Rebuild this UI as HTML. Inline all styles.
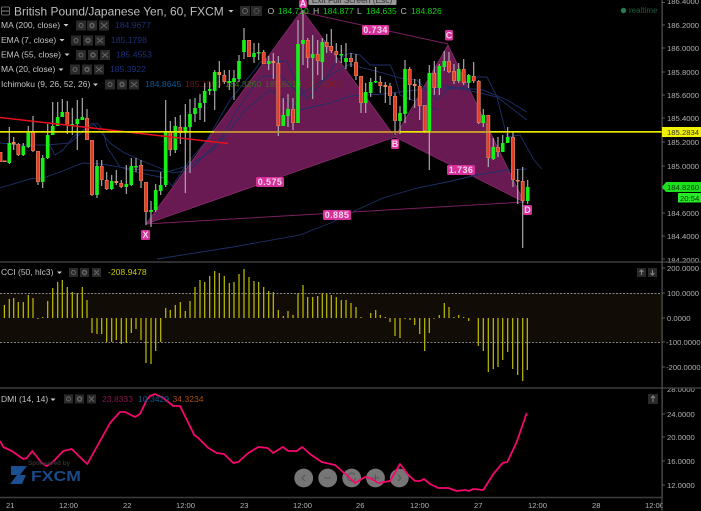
<!DOCTYPE html>
<html><head><meta charset="utf-8"><style>
html,body{margin:0;padding:0;background:#000;width:701px;height:511px;overflow:hidden}
svg{display:block;filter:blur(.3px);font-family:"Liberation Sans",sans-serif}
.b{fill:#2a2a2a}.g{stroke:#666;fill:none;stroke-width:1}
.l{fill:#c4c4c4;font-size:8.5px}.a{fill:#b0b0b0;font-size:7.7px}.t{fill:#b5b5b5;font-size:7.6px}
.p{fill:#d6309b}.w{fill:#f4d6ea;font-size:9px;font-weight:bold;text-anchor:middle}
</style></head><body>
<svg width="701" height="511" viewBox="0 0 701 511" xmlns="http://www.w3.org/2000/svg">
<rect width="701" height="511" fill="#000"/>
<!-- pattern -->
<path d="M146 224L302 10L395 137Z" fill="#6a1a52" stroke="#8a2b6e" stroke-width=".8"/>
<path d="M395 137L448 45L524 202Z" fill="#6a1a52" stroke="#8a2b6e" stroke-width=".8"/>
<path d="M146 224L524 202M302 12L448 44" stroke="#7a1f5f" stroke-width="1" fill="none"/>
<!-- indicator text under chart -->
<text x="145" y="87" font-size="8.7" fill="#0a5a9a">184.8645</text>
<text x="185" y="87" font-size="8.7" fill="#6a1515">185.1550</text>
<text x="225" y="87" font-size="8.7" fill="#3f6f1a">184.8260</text>
<text x="265" y="87" font-size="8.7" fill="#3f6a1a">185.6613</text>
<text x="305" y="87" font-size="8.7" fill="#8a1a1a">185.4265</text>
<!-- blue MA lines -->
<g fill="none" stroke="#1f3068" stroke-width=".9">
<path d="M157 259L233 247L300 235L333 222L350 213L383 198L417 188L447 182L477 175L507 170L527 169"/>
<path d="M0 188L30 179L43 178L60 172L83 163L100 164L133 169L167 172L190 165L213 150L230 130L245 110L270 90L300 110L330 103L350 96L383 94L417 90L443 88L463 88L483 90L507 100L527 112"/>
<path d="M0 143L20 145L47 145L70 143L87 128L97 123L103 130L107 147L120 167L135 172L165 178L172 186L190 160L207 140L230 100L257 67L260 62L287 61L295 80L307 99L327 77L337 60L350 53L360 55L370 65L390 65L394 73L400 95L437 110"/>
<path d="M48 142L55 155L63 150L73 137L93 123L110 143L123 152L140 160L157 167L173 173L190 170L220 140L237 110L260 77L280 75L300 95L330 75L350 64L363 68L383 73L400 78L417 80L437 100L447 90L463 87L477 77L487 77L497 97L507 137L520 135L534 160L542 169"/>
<path d="M433 83L467 90L497 97L527 120"/>
</g>
<!-- wicks -->
<path stroke="#b0b0b0" stroke-width="1.150" fill="none" d="M9.3 127V164M13.7 137V150M18.3 143V156M23.3 143V156M28.3 126V148M33 116V152M38 151V185M42.700 155V188M47.700 124V159M52.700 102V135M57.700 102V126M62.300 99V117M67.300 101V134M72.300 108V135M77.300 100V150M82.300 98V120M87 109V140M92 140V196M97 160V198M101.700 160V186M106.700 172V190M111.700 175V190M116.300 170V185M121.300 180V188M126.300 165V194M131.300 158V186M136 158V172M141 160V188M146 182V225M151 201V227M155.700 184V212M160.700 172V195M165.700 100V187M170.300 121V156M175.300 117V153M180.300 115V144M185.300 104V193M190 99V173M195 98V122M200 94V120M204.700 83V122M209.700 82V95M214.700 70V110M219.300 61V88M224.300 70V84M229.300 70V90M234 70V100M239 55V82M244 28V59M249 40V57M254 43V63M258.700 43V60M263.700 50V64M268.700 56V70M273.300 53V79M278.300 56V136M283.300 98V126M288 94V127M293 98V130M298 20V123M303 10V65M307.700 38V68M312.700 35V99M317.700 40V75M322.300 38V80M326.700 34V53M331.300 29V53M336.300 43V63M341.300 45V63M346 43V69M351 53V67M356 54V80M361 76V113M365.700 83V113M370.700 78V97M375.700 67V83M380.300 76V93M385.300 82V103M390 83V105M395 93V135M400 106V134M405 60V123M409.700 67V100M414.700 79V108M419.700 79V120M424.700 105V133M429.300 65V170M434.300 61V95M439.300 64V95M444.300 51V71M449 52V73M454 64V84M458.700 63V83M463.700 59V85M468.700 74V88M473.700 62V83M478.700 80V124M483.300 109V127M488.300 115V167M493.300 138V160M498 137V157M502.700 135V152M507.700 127V143M513 132V187M517.700 169V204M522.700 167V248M527.700 180V204"/>
<!-- red bodies -->
<g fill="none">
<path stroke="#e88a5c" stroke-width="3.8" d="M.5 152V162M4.700 160.500V162M13.700 142V144.500M18.300 144V155M33 132V151M38 151V182M67.300 112V125M87 118V140M92 140V195M101.700 166V180M106.700 180V189M116.300 181V183M121.300 183V187M141 165V181M146 182V212M170.300 132V150M180.300 127V133M219.300 72V75M224.300 75V82M249 40V57M263.700 52V64M273.300 61V63M278.300 63V126M293 109V123M307.700 40V58M317.700 54V61M326.700 42V47M331.300 46V51M336.300 51V55M351 58V62M356 62V76M361 76V103M380.300 82V86M385.300 85V87M390 86V96M395 96V121M409.700 69V85M414.700 84V86M419.700 86V106M424.700 105V131M434.300 73V88M449 61V72M454 71V81M463.700 69V83M473.700 76V81M478.700 81V123M488.300 115V158M498 147V152M513 137V180M517.700 180V181.500M522.700 181V201"/>
<path stroke="#e63a28" stroke-width="2.400" d="M.5 152.500V161.500M18.300 144.500V154.500M33 132.500V150.500M38 151.500V181.500M67.300 112.500V124.500M87 118.500V139.500M92 140.500V194.500M101.700 166.500V179.500M106.700 180.500V188.500M121.300 183.500V186.500M141 165.500V180.500M146 182.500V211.500M170.300 132.500V149.500M180.300 127.500V132.500M224.300 75.500V81.500M249 40.500V56.500M263.700 52.500V63.500M278.300 63.500V125.500M293 109.500V122.500M307.700 40.500V57.500M317.700 54.500V60.500M326.700 42.500V46.500M331.300 46.500V50.500M336.300 51.500V54.500M351 58.500V61.500M356 62.500V75.500M361 76.500V102.500M380.300 82.500V85.500M390 86.500V95.500M395 96.500V120.500M409.700 69.500V84.500M419.700 86.500V105.500M424.700 105.500V130.500M434.300 73.500V87.500M449 61.500V71.500M454 71.500V80.500M463.700 69.500V82.500M473.700 76.500V80.500M478.700 81.500V122.500M488.300 115.500V157.500M498 147.500V151.500M513 137.500V179.500M522.700 181.500V200.500"/>
<!-- green bodies -->
<path stroke="#18ee18" stroke-width="3.700" d="M9.300 143V163M23.300 146V155M28.300 132V147M42.700 158V182M47.700 135V158M52.700 126V135M57.700 117V126M62.300 112V117M72.300 124V125.500M77.300 119V124M82.300 117V120M97 166V195M111.700 181V189M126.300 184V187M131.300 166V185M136 166V167.500M151 210V212M155.700 190V210M160.700 185V191M165.700 132V185M175.300 126V150M185.300 127V133M190 114V127M195 108V114M200 103V108M204.700 91V103M209.700 89V91M214.700 72V91M229.300 81V83M234 78V82M239 61V79M244 40V52M254 53V57M258.700 52V53.500M268.700 61V64M283.300 115V126M288 109V116M298 44V123M303 40V44M312.700 54V58M322.300 42V62M341.300 54V55.500M346 58V62M365.700 92V103M370.700 82V93M375.700 81V82.500M400 113V121M405 69V114M429.300 73V131M439.300 66V88M444.300 61V67M458.700 69V81M468.700 75V83M483.300 115V123M493.300 147V159M502.700 143V152M507.700 137V143M527.700 187V201"/>
</g>
<!-- horizontal lines -->
<path d="M0 117.500L180 138L228 143.500" stroke="#e8101c" stroke-width="1.500" fill="none"/>
<rect x="0" y="131" width="662" height="1.700" fill="#e8e800"/>
<rect x="214" y="131" width="186" height="1.700" fill="#c98a3a"/>
<rect x="430" y="131" width="60" height="1.700" fill="#c9a030"/>
<!-- pattern labels -->
<rect class="p" x="299" y="0" width="8" height="8" rx="1.500"/><text class="w" x="303" y="6.500">A</text>
<rect class="p" x="445" y="30" width="8" height="10.500" rx="1.500"/><text class="w" x="449" y="38.500">C</text>
<rect class="p" x="362" y="25" width="27" height="10" rx="1.500"/><text class="w" x="375.500" y="33.200" letter-spacing=".4">0.734</text>
<rect class="p" x="256" y="177" width="28" height="10" rx="1.500"/><text class="w" x="270" y="185.200" letter-spacing=".4">0.575</text>
<rect class="p" x="323" y="210" width="28" height="10" rx="1.500"/><text class="w" x="337" y="218.200" letter-spacing=".4">0.885</text>
<rect class="p" x="447" y="165" width="28" height="10" rx="1.500"/><text class="w" x="461" y="173.200" letter-spacing=".4">1.736</text>
<rect class="p" x="141" y="230" width="9" height="10" rx="1.500"/><text class="w" x="145.500" y="238.200">X</text>
<rect class="p" x="391" y="139" width="8" height="10" rx="1.500"/><text class="w" x="395" y="147.200">B</text>
<rect class="p" x="523" y="205" width="9" height="10" rx="1.500"/><text class="w" x="527.500" y="213.200">D</text>
<!-- CCI -->
<rect x="0" y="293" width="662" height="49" fill="#110d06"/>
<path d="M0 293.500H662M0 342.500H662" stroke="#aaa" stroke-width=".8" stroke-dasharray="2 1.500" fill="none"/>
<path stroke="#c0c000" stroke-width="1.200" fill="none" d="M4.400 318V305M9.300 318V299M13.700 318V298M18.300 318V302M23.300 318V302M28.300 318V295M33 318V298M38 318V319M42.700 318V317M47.700 318V301M52.700 318V288M57.700 318V282M62.300 318V280M67.300 318V287M72.300 318V292M77.300 318V293M82.300 318V287M87 318V300M92 318V333M97 318V334M101.700 318V334M106.700 318V342M111.700 318V342M116.300 318V340M121.300 318V344M126.300 318V343M131.300 318V333M136 318V329M141 318V340M146 318V363M151 318V364M155.700 318V351M160.700 318V342M165.700 318V308M170.300 318V310M175.300 318V305M180.300 318V302M185.300 318V311M190 318V301M195 318V287M200 318V280M204.700 318V282M209.700 318V276M214.700 318V271M219.300 318V273M224.300 318V276M229.300 318V283M234 318V282M239 318V274M244 318V269M249 318V277M254 318V281M258.700 318V282M263.700 318V287M268.700 318V291M273.300 318V292M278.300 318V310M283.300 318V316M288 318V311M293 318V315M298 318V293M303 318V285M307.700 318V297M312.700 318V297M317.700 318V296M322.300 318V293M326.700 318V294M331.300 318V295M336.300 318V297M341.300 318V300M346 318V300M351 318V303M356 318V307M361 318V317M370.700 318V313M375.700 318V310M380.300 318V315M385.300 318V317M390 318V322M395 318V336M400 318V338M405 318V319M410 318V320M414.700 318V325M419.700 318V334M424.700 318V351M429.300 318V333M434 318V318.700M439.300 318V315M444.300 318V303M449 318V307M454 318V317M458.700 318V315M463.700 318V317M468.700 318V321M478.300 318V346M483.300 318V351M488.300 318V372M493.300 318V369M498 318V367M502.700 318V360M507.700 318V352M512.700 318V369M517.700 318V375M522.700 318V381M527.300 318V370"/>
<!-- nav circles -->
<g fill="#767676"><circle cx="303.700" cy="478" r="9.400"/><circle cx="327.700" cy="478" r="9.400"/><circle cx="351.700" cy="478" r="9.400"/><circle cx="375.500" cy="478" r="9.400"/><circle cx="399.300" cy="478" r="9.400"/></g>
<path d="M305 475l-3 3 3 3M324 478h7M355 475a4 4 0 1 0 .5 3M372 478h7M375.500 474.500v7M398 475l3 3-3 3" stroke="#555" stroke-width="1" fill="none"/>
<!-- DMI -->
<path fill="none" stroke="#f5076e" stroke-width="1.800" stroke-linejoin="round" d="M0 441L3.300 447L11.700 451L23.300 459L26.700 458L32.300 451L41.700 463L46.700 466L51.700 463L63.300 451L71.700 449L85 462L87.300 464L110 423L120 412L125 412L135 417L140 414L146.700 400L150 396L155 394L163.300 398L173.300 406L180 406L194.300 435L198.300 438L208.300 448L216.700 453L224 454L233.300 463L238.300 462L248.300 453L258.300 447L267.700 448L273.300 453L282.700 447L288.300 451L296.700 451L302.300 447L310 454L321.700 462L335 465L350 478L355 483L365 477L370 478L378.300 483L390 481L400 464L408.300 475L415 481L420 481L424 479L430 484L438.300 488L448.300 488L456.700 491L465 490L469 491L473.300 489L483.300 490L493.300 474L502.700 463L507.300 462L516.700 442L526.700 413"/>
<!-- axis -->
<g class="a">
<text x="667" y="4">186.4000</text><text x="667" y="28">186.2000</text><text x="667" y="51">186.0000</text><text x="667" y="75">185.8000</text><text x="667" y="98">185.6000</text><text x="667" y="121">185.4000</text><text x="667" y="145">185.2000</text><text x="667" y="169">185.0000</text><text x="667" y="216">184.6000</text><text x="667" y="239">184.4000</text><text x="667" y="263">184.2000</text>
<text x="667" y="271">200.0000</text><text x="667" y="296">100.0000</text><text x="667" y="321">0.0000</text><text x="666" y="345">-100.0000</text><text x="666" y="370">-200.0000</text>
<text x="667" y="392">28.0000</text><text x="667" y="417">24.0000</text><text x="667" y="440">20.0000</text><text x="667" y="464">16.0000</text><text x="667" y="488">12.0000</text>
</g>
<rect x="663" y="380" width="38" height="8" fill="#000"/>
<!-- separators -->
<path d="M0 262H701M0 388H701M0 497.500H662" stroke="#3c3c3c" stroke-width="1.600" fill="none"/>
<rect x="661.500" y="0" width="1.200" height="511" fill="#555"/>
<path d="M662 2.500h3M662 25h3M662 48h3M662 72h3M662 95h3M662 118h3M662 142h3M662 166h3M662 189h3M662 213h3M662 236h3M662 259h3M662 268h3M662 293h3M662 318h3M662 342h3M662 367h3M662 414h3M662 437h3M662 461h3M662 485h3" stroke="#777" stroke-width=".8"/>
<rect x="662" y="127" width="39" height="10" fill="#f2f200"/><text x="667" y="135" font-size="7.700" fill="#333">185.2834</text>
<path d="M662 187L666 182H701V192H666Z" fill="#1de01d"/><text x="667" y="190" font-size="7.700" fill="#0a3a0a">184.8260</text>
<rect x="678" y="193" width="23" height="9.500" fill="#28e828"/><text x="680" y="201" font-size="7.700" fill="#0a3a0a">20:54</text>
<!-- header -->
<rect x="1.500" y="7" width="8" height="8" rx="1" fill="none" stroke="#888" stroke-width=".8"/><path d="M2 11H9" stroke="#aaa" stroke-width=".8"/>
<text x="14" y="15.500" font-size="11.950" fill="#bdbdbd">British Pound/Japanese Yen, 60, FXCM</text>
<path d="M228.500 10h5l-2.500 2.500z" fill="#ccc"/>
<rect class="b" x="240" y="6" width="10" height="10"/><rect class="b" x="251" y="6" width="11" height="10"/>
<circle class="g" cx="245" cy="11" r="2.500"/><circle class="g" cx="256.500" cy="11" r="2.500" stroke-dasharray="1 .6" stroke-width="1.500"/>
<text x="267.500" y="14" font-size="8.700" fill="#bbb">O</text><text x="278" y="14" font-size="8.500" fill="#0fd00f">184.710</text>
<text x="313" y="14" font-size="8.700" fill="#bbb">H</text><text x="323" y="14" font-size="8.500" fill="#0fd00f">184.877</text>
<text x="357" y="14" font-size="8.700" fill="#bbb">L</text><text x="366" y="14" font-size="8.500" fill="#0fd00f">184.635</text>
<text x="400.500" y="14" font-size="8.700" fill="#bbb">C</text><text x="411" y="14" font-size="8.500" fill="#0fd00f">184.826</text>
<circle cx="623.500" cy="10.500" r="2.700" fill="#2a7a4f"/><text x="629" y="13" font-size="8" fill="#1f5f3c">realtime</text>
<rect x="308.500" y="-6" width="88" height="11" rx="1" fill="#999"/><text x="352" y="3" font-size="8.400" text-anchor="middle" fill="#333">Exit Full Screen (Esc)</text>
<!-- indicator rows -->
<g class="l">
<text x="1" y="28">MA (200, close)</text><text x="1" y="43">EMA (7, close)</text><text x="1" y="57.500">EMA (55, close)</text><text x="1" y="72">MA (20, close)</text><text x="1" y="87">Ichimoku (9, 26, 52, 26)</text>
<text x="1" y="275">CCI (50, hlc3)</text><text x="1" y="402">DMI (14, 14)</text>
</g>
<path fill="#ccc" d="M63.500 24h5l-2.500 2.500zM59.500 39h5l-2.500 2.500zM64.500 53.500h5l-2.500 2.500zM58.500 68.500h5l-2.500 2.500zM93 83.500h5l-2.500 2.500zM57 271.500h5l-2.500 2.500zM50.500 398.500h5l-2.500 2.500z"/>
<path class="b" d="M76 20.500h10v10h-10zM87 20.500h10v10h-10zM99 20.500h10v10h-10zM71 35.500h10v10h-10zM83 35.500h10v10h-10zM95 35.500h10v10h-10zM76 50h10v10h-10zM88 50h10v10h-10zM100 50h10v10h-10zM70 64.500h10v10h-10zM82 64.500h10v10h-10zM94 64.500h10v10h-10zM105 79.500h10v10h-10zM117 79.500h10v10h-10zM129 79.500h10v10h-10zM69 268h9v9h-9zM80 268h9v9h-9zM92 268h9v9h-9zM64 394.500h9v9h-9zM75 394.500h9v9h-9zM87 394.500h9v9h-9zM637 268h9v9h-9zM648 268h9v9h-9zM648 394h10v10h-10z"/>
<g class="g" stroke-width=".8">
<circle cx="81" cy="25.500" r="2"/><circle cx="92" cy="25.500" r="2" stroke-width="1.400"/><path d="M101 23l6 5M107 23l-6 5"/>
<circle cx="76" cy="40.500" r="2"/><circle cx="88" cy="40.500" r="2" stroke-width="1.400"/><path d="M97 38l6 5M103 38l-6 5"/>
<circle cx="81" cy="55" r="2"/><circle cx="93" cy="55" r="2" stroke-width="1.400"/><path d="M102 52.500l6 5M108 52.500l-6 5"/>
<circle cx="75" cy="69.500" r="2"/><circle cx="87" cy="69.500" r="2" stroke-width="1.400"/><path d="M96 67l6 5M102 67l-6 5"/>
<circle cx="110" cy="84.500" r="2"/><circle cx="122" cy="84.500" r="2" stroke-width="1.400"/><path d="M131 82l6 5M137 82l-6 5"/>
<circle cx="73.500" cy="272.500" r="2"/><circle cx="84.500" cy="272.500" r="2" stroke-width="1.400"/><path d="M94 270l5 5M99 270l-5 5"/>
<circle cx="68.500" cy="399" r="2"/><circle cx="79.500" cy="399" r="2" stroke-width="1.400"/><path d="M89 396.500l5 5M94 396.500l-5 5"/>
<path d="M641.500 275v-5M639.500 272l2-2 2 2M652.500 270v5M650.500 273l2 2 2-2M653 402v-6M651 398l2-2 2 2" stroke="#888"/>
</g>
<g font-size="8.600">
<text x="115" y="28" fill="#1e2f7a">184.9677</text><text x="111" y="43" fill="#1e2f7a">185.1798</text><text x="116" y="57.500" fill="#1e2f7a">185.4553</text><text x="110" y="72" fill="#1e2f7a">185.3922</text>
<text x="108" y="275" fill="#c8c800">-208.9478</text>
<text x="102" y="402" fill="#8a0f4a">23.8333</text><text x="138" y="402" fill="#0a5a8f">10.3429</text><text x="172.500" y="402" fill="#a8500a">34.3234</text>
</g>
<!-- logo -->
<text x="28" y="465" font-size="6.300" font-weight="bold" fill="#333">Sponsored by</text>
<path d="M11 466H27L20 475H26L22 484H10L17 475H11Z" fill="#1c4f8f"/>
<text x="31" y="481" font-size="15" font-weight="bold" fill="#1a4a88" textLength="50" lengthAdjust="spacingAndGlyphs">FXCM</text>
<!-- time axis -->
<g class="t">
<text x="6" y="508">21</text><text x="59" y="508">12:00</text><text x="123" y="508">22</text><text x="176" y="508">12:00</text><text x="240" y="508">23</text><text x="293" y="508">12:00</text><text x="356" y="508">26</text><text x="410" y="508">12:00</text><text x="474" y="508">27</text><text x="528" y="508">12:00</text><text x="592" y="508">28</text><text x="645" y="508">12:00</text>
</g>
<rect x="662.600" y="498" width="39" height="13" fill="#000"/>
</svg>
</body></html>
